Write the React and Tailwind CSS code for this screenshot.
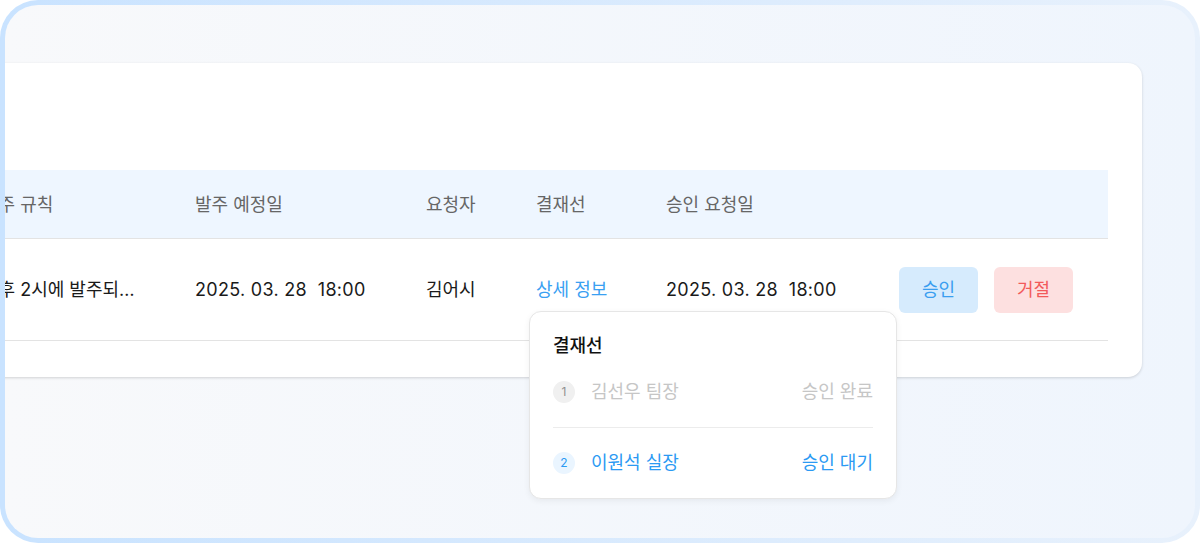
import React from "react";

const headers = ["발주 규칙", "발주 예정일", "요청자", "결재선", "승인 요청일", ""];

const approvers = [
  { no: 1, name: "김선우 팀장", status: "승인 완료", done: true },
  { no: 2, name: "이원석 실장", status: "승인 대기", done: false },
];

const ApprovalPopover = () => {
  return (
    <div className="absolute left-[-7px] top-[33px] z-10 w-[368px] rounded-[12px] border border-[#e6e6e6] bg-white px-[23px] pb-[23px] pt-[22px] shadow-[0_2px_6px_rgba(0,0,0,0.06)]">
      <div className="h-6 text-[18px] font-medium leading-6 text-[#111]">결재선</div>
      {approvers.map((a, i) => (
        <div
          key={a.no}
          className={`flex items-center justify-between ${i === 0 ? "border-b border-[#ececec] pb-[23px] pt-[22px]" : "pt-[23px]"}`}
        >
          <div className="flex h-[22px] items-center gap-4">
            <span
              className={`flex h-[22px] w-[22px] items-center justify-center rounded-full text-[12px] ${a.done ? "bg-[#f0f0f0] text-[#8f8f8f]" : "bg-[#eaf5ff] text-[#2b9af3]"}`}
            >
              {a.no}
            </span>
            <span className={`text-[18px] leading-6 ${a.done ? "text-[#c6c6c6]" : "text-[#2b9af3]"}`}>{a.name}</span>
          </div>
          <span className={`text-[18px] leading-6 ${a.done ? "text-[#c6c6c6]" : "text-[#2b9af3]"}`}>{a.status}</span>
        </div>
      ))}
    </div>
  );
};

export default function App() {
  return (
    <div className="h-[543px] w-[1200px] bg-white font-['Inter','Noto_Sans_CJK_KR',sans-serif]">
      <div className="h-full w-full rounded-[38px] bg-gradient-to-r from-[#c9e3ff] to-[#e8f1fc] p-[5px]">
        <div className="flex h-full w-full overflow-hidden rounded-[33px] bg-gradient-to-r from-[#f8f9fb] to-[#eff5fd] pt-[58px]">
          {/* card, partly scrolled off to the left */}
          <div className="ml-[-75px] h-[314px] w-[1212px] shrink-0 rounded-[14px] bg-white px-[34px] pb-[36px] pt-[107px] shadow-[0_1px_3px_rgba(0,0,0,0.16)]">
            <div className="grid h-[69px] grid-cols-[213px_231px_110px_130px_233px_1fr] items-center border-b border-[#e3e3e3] bg-[#eef6ff] text-[18px] text-[#666]">
              {headers.map((h, i) => (
                <div key={i} className="pl-[18px]">{h}</div>
              ))}
            </div>
            <div className="grid h-[102px] grid-cols-[213px_231px_110px_130px_233px_1fr] items-center border-b border-[#e3e3e3] text-[18px] text-[#1a1a1a]">
              <div className="pl-[18px]">
                <div className="w-[154px] truncate">오후 2시에 발주되는 상품 규칙</div>
              </div>
              <div className="pl-[18px] tracking-[0.3px]">2025. 03. 28&nbsp;&nbsp;18:00</div>
              <div className="pl-[18px]">김어시</div>
              <div className="pl-[18px]">
                <span className="relative inline-block leading-6 text-[#3aa0f2]">
                  상세 정보
                  <ApprovalPopover />
                </span>
              </div>
              <div className="pl-[18px] tracking-[0.3px]">2025. 03. 28&nbsp;&nbsp;18:00</div>
              <div className="flex gap-4 pl-[18px]">
                <button className="h-[46px] w-[79px] rounded-[6px] bg-[#d6ebfd] text-[18px] text-[#3a9ef0]">승인</button>
                <button className="h-[46px] w-[79px] rounded-[6px] bg-[#fde0e0] text-[18px] text-[#f25a5a]">거절</button>
              </div>
            </div>
          </div>
        </div>
      </div>
    </div>
  );
}
